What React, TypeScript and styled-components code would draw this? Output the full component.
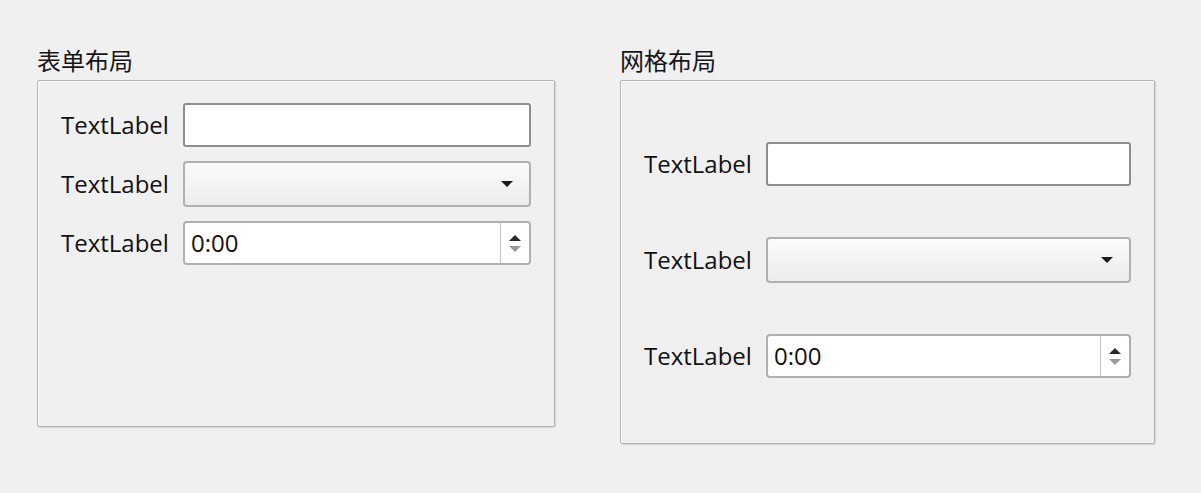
import React, { FunctionComponent } from 'react';
import styled, { createGlobalStyle } from 'styled-components';

const GlobalStyles = createGlobalStyle`
  html, body {
    margin: 0;
    padding: 0;
    background: #f0f0f0;
  }
  body {
    font-family: "Open Sans", "Noto Sans CJK SC", sans-serif;
    color: #111;
  }
`;

const Root = styled.div`
  width: 1201px;
  height: 493px;
  box-sizing: border-box;
  padding: 45px 0 0 37px;
  display: flex;
  align-items: flex-start;
  gap: 65px;
`;

const Group = styled.section<{ $width: number }>`
  width: ${(p) => p.$width}px;
  display: flex;
  flex-direction: column;
`;

const GroupTitle = styled.div`
  font-family: "Noto Sans CJK SC", "Noto Sans", sans-serif;
  font-size: 24px;
  line-height: 30px;
  height: 35px;
  color: #161616;
`;

const Frame = styled.div<{ $height: number }>`
  height: ${(p) => p.$height}px;
  box-sizing: border-box;
  border: 1px solid #b4b4b4;
  border-radius: 2px;
  box-shadow: 1px 1px 1px #d2d2d2, inset 1px 1px 0 #fbfbfb;
`;

const FormLayout = styled.div`
  display: grid;
  grid-template-columns: auto 1fr;
  column-gap: 14px;
  row-gap: 14px;
  padding: 22px 23px 0 23px;
  align-items: center;
`;

const GridLayout = styled.div`
  height: 100%;
  box-sizing: border-box;
  display: grid;
  grid-template-columns: auto 1fr;
  grid-template-rows: repeat(3, 1fr);
  column-gap: 14px;
  padding: 35px 23px 39px 23px;
  align-items: center;
`;

const Label = styled.span`
  font-size: 24px;
  line-height: 30px;
  white-space: nowrap;
`;

const LineEdit = styled.div`
  height: 44px;
  box-sizing: border-box;
  background: #fff;
  border: 2px solid #8e8e8e;
  border-radius: 3px;
`;

const Combo = styled.div`
  height: 46px;
  box-sizing: border-box;
  background: linear-gradient(#fbfbfb, #ececec);
  border: 2px solid #b0b0b0;
  border-radius: 4px;
  display: flex;
  align-items: center;
  justify-content: flex-end;
  padding-right: 16px;
`;

const ComboArrow = styled.span`
  width: 0;
  height: 0;
  border-left: 6px solid transparent;
  border-right: 6px solid transparent;
  border-top: 6px solid #1a1a1a;
`;

const Spin = styled.div`
  height: 44px;
  box-sizing: border-box;
  background: #fff;
  border: 2px solid #b0b0b0;
  border-radius: 4px;
  display: flex;
  align-items: stretch;
`;

const SpinText = styled.span`
  flex: 1;
  font-size: 24px;
  line-height: 40px;
  padding-left: 6px;
  color: #111;
`;

const SpinButtons = styled.div`
  width: 28px;
  border-left: 1px solid #c4c4c4;
  display: flex;
  flex-direction: column;
  align-items: center;
  justify-content: center;
  gap: 5px;
`;

const Triangle = styled.span<{ $up?: boolean; $color: string }>`
  width: 0;
  height: 0;
  border-left: 6px solid transparent;
  border-right: 6px solid transparent;
  ${(p) => (p.$up ? `border-bottom: 6px solid ${p.$color};` : `border-top: 6px solid ${p.$color};`)}
`;

const SpinBox: FunctionComponent = () => (
  <Spin>
    <SpinText>0:00</SpinText>
    <SpinButtons>
      <Triangle $up $color="#2a2a2a" />
      <Triangle $color="#9a9a9a" />
    </SpinButtons>
  </Spin>
);

const ComboBox: FunctionComponent = () => (
  <Combo>
    <ComboArrow />
  </Combo>
);

const Fields: FunctionComponent = () => (
  <>
    <Label>TextLabel</Label>
    <LineEdit />
    <Label>TextLabel</Label>
    <ComboBox />
    <Label>TextLabel</Label>
    <SpinBox />
  </>
);

const App: FunctionComponent = () => (
  <Root>
    <GlobalStyles />
    <Group $width={518}>
      <GroupTitle>表单布局</GroupTitle>
      <Frame $height={347}>
        <FormLayout>
          <Fields />
        </FormLayout>
      </Frame>
    </Group>
    <Group $width={535}>
      <GroupTitle>网格布局</GroupTitle>
      <Frame $height={364}>
        <GridLayout>
          <Fields />
        </GridLayout>
      </Frame>
    </Group>
  </Root>
);

App.displayName = 'App';

export default App;
